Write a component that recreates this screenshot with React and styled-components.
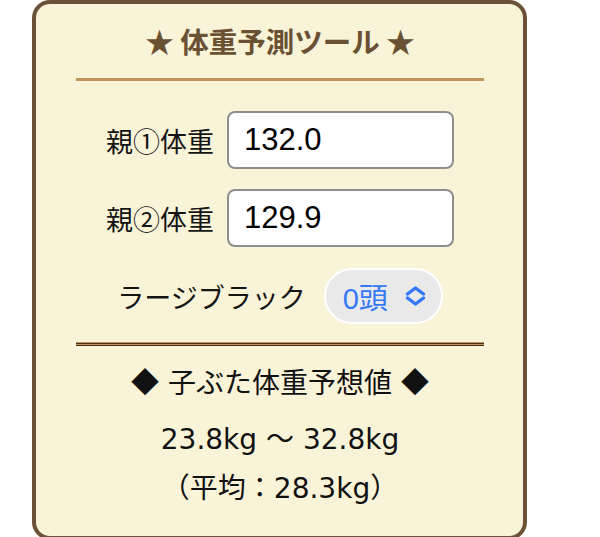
import React from "react";
import styled, { createGlobalStyle } from "styled-components";

const Global = createGlobalStyle`
  html, body { margin: 0; padding: 0; background: #ffffff; }
  body { font-family: "Noto Sans CJK JP", "Noto Sans", sans-serif; }
`;

const Card = styled.div`
  box-sizing: border-box;
  width: 495px;
  height: 540px;
  margin-left: 32px;
  border: 4px solid #6b5236;
  border-radius: 18px;
  background: #f9f4d8;
  padding: 0 39px 0 40px;
  display: flex;
  flex-direction: column;
`;

const Title = styled.h1`
  margin: 16px 0 16px;
  font-size: 28.5px;
  line-height: 42px;
  font-weight: 700;
  color: #6b5133;
  text-align: center;
  font-family: "Noto Sans CJK JP", sans-serif;
`;

const Rule = styled.div`
  height: 3px;
  background: #c0935f;
`;

const DoubleRule = styled.div`
  height: 4px;
  margin-top: 17px;
  background: linear-gradient(
    to bottom,
    #c0935f 0 1px,
    #4a3019 1px 2px,
    #c0935f 2px 3px,
    #4a3019 3px 4px
  );
`;

const Rows = styled.div`
  margin-top: 30px;
  display: flex;
  flex-direction: column;
  gap: 20px;
`;

const Row = styled.div`
  height: 58px;
  display: flex;
  align-items: center;
  justify-content: center;
  gap: ${(p) => p.$gap}px;
`;

const Label = styled.label`
  font-size: 27px;
  color: #151515;
  font-family: "Noto Sans CJK JP", sans-serif;
  white-space: nowrap;
`;

const Input = styled.input`
  box-sizing: border-box;
  width: 227px;
  height: 58px;
  border: 2px solid #8e8e8e;
  border-radius: 8px;
  background: #ffffff;
  padding: 0 0 0 15px;
  font-size: 31px;
  font-family: "Liberation Sans", Arial, sans-serif;
  color: #000;
  outline: none;
`;

const Picker = styled.div`
  box-sizing: border-box;
  width: 119px;
  height: 56px;
  border: 2px solid #ffffff;
  border-radius: 28px;
  background: #e9e9e9;
  display: flex;
  align-items: center;
  padding: 0 14px 0 17px;
  gap: 10px;
  color: #3478f6;
`;

const PickerText = styled.span`
  font-size: 29px;
  font-family: "Liberation Sans", "Noto Sans CJK JP", sans-serif;
  flex: 1;
  white-space: nowrap;
`;

const Results = styled.div`
  margin-top: 11px;
  display: flex;
  flex-direction: column;
  align-items: center;
`;

const ResultLine = styled.div`
  margin-top: ${(p) => p.$mt || 0}px;
  font-size: 28px;
  line-height: 48px;
  color: #111;
  font-family: "DejaVu Sans", "Noto Sans CJK JP", sans-serif;
  white-space: nowrap;
`;

const Mark = styled.span`
  font-family: "Noto Sans CJK JP", sans-serif;
`;

function Chevrons() {
  return (
    <svg width="23" height="20" viewBox="0 0 23 20" fill="none">
      <path d="M3.5 8 L11.5 2 L19.5 8" stroke="currentColor" strokeWidth="3.4" strokeLinecap="round" strokeLinejoin="round" />
      <path d="M3.5 12 L11.5 18 L19.5 12" stroke="currentColor" strokeWidth="3.4" strokeLinecap="round" strokeLinejoin="round" />
    </svg>
  );
}

export default function App() {
  return (
    <>
      <Global />
      <Card>
        <Title>★ 体重予測ツール ★</Title>
        <Rule />
        <Rows>
          <Row $gap={13}>
            <Label htmlFor="p1">親①体重</Label>
            <Input id="p1" defaultValue="132.0" />
          </Row>
          <Row $gap={13}>
            <Label htmlFor="p2">親②体重</Label>
            <Input id="p2" defaultValue="129.9" />
          </Row>
          <Row $gap={18}>
            <Label>ラージブラック</Label>
            <Picker>
              <PickerText>0頭</PickerText>
              <Chevrons />
            </Picker>
          </Row>
        </Rows>
        <DoubleRule />
        <Results>
          <ResultLine>
            <Mark>◆</Mark> 子ぶた体重予想値 <Mark>◆</Mark>
          </ResultLine>
          <ResultLine $mt={8}>23.8kg 〜 32.8kg</ResultLine>
          <ResultLine $mt={1}>（平均：28.3kg）</ResultLine>
        </Results>
      </Card>
    </>
  );
}
